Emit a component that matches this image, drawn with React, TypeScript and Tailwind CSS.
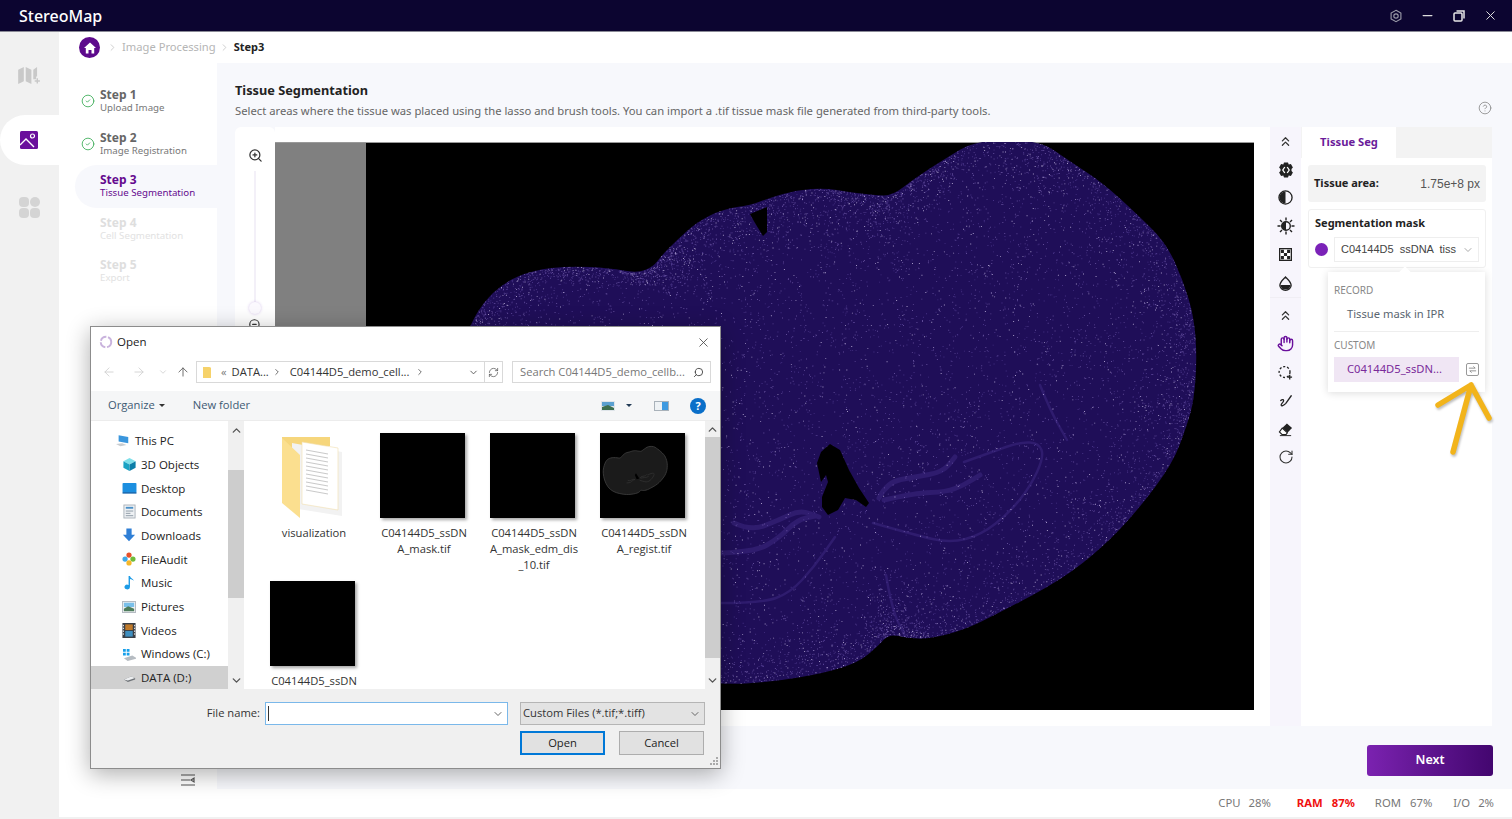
import React from 'react';
import {
  ArrowLeft, ArrowRight, ArrowUp, ChevronDown, ChevronRight, ChevronUp, ChevronsUp, Hand,
  Minus, RotateCw, Search, X, ZoomIn, ZoomOut, CircleHelp, RefreshCw, CircleCheck,
} from 'lucide-react';

const sans = "font-['Noto_Sans',sans-serif]";

// tissue outline, in page coordinates
const outline: [number, number][] = [
  [470, 325], [483, 303], [503, 283], [533, 270], [570, 266], [610, 268], [637, 273], [653, 267], [662, 255], [677, 240],
  [697, 222], [723, 209], [751, 205], [769, 198], [797, 190], [825, 188], [849, 192], [873, 195], [892, 196], [915, 178],
  [943, 160], [976, 140], [1039, 140], [1068, 160], [1103, 183], [1138, 215], [1166, 243], [1183, 280], [1194, 317], [1197, 357],
  [1194, 400], [1187, 425], [1173, 463], [1138, 510], [1103, 547], [1061, 580], [999, 613], [964, 630], [929, 639], [908, 638],
  [889, 634], [877, 647], [859, 662], [825, 673], [772, 682], [720, 685], [640, 675], [560, 650], [500, 600], [460, 520],
  [445, 440], [450, 380],
];

const smooth = (pts: [number, number][]) => {
  const mid = (a: [number, number], b: [number, number]) => [(a[0] + b[0]) / 2, (a[1] + b[1]) / 2];
  const first = mid(pts[pts.length - 1], pts[0]);
  let d = `M${first[0]} ${first[1]}`;
  pts.forEach((p, i) => {
    const m = mid(p, pts[(i + 1) % pts.length]);
    d += `Q${p[0]} ${p[1]} ${m[0]} ${m[1]}`;
  });
  return d + 'Z';
};

const line = (pts: number[][]) => {
  let d = `M${pts[0][0]} ${pts[0][1]}`;
  for (let i = 1; i < pts.length - 1; i++) {
    const mx = (pts[i][0] + pts[i + 1][0]) / 2;
    const my = (pts[i][1] + pts[i + 1][1]) / 2;
    d += `Q${pts[i][0]} ${pts[i][1]} ${mx} ${my}`;
  }
  const l = pts[pts.length - 1];
  return d + `L${l[0]} ${l[1]}`;
};

const tissuePath = smooth(outline);

const seeded = (s: number) => () => {
  s = (s + 0x6d2b79f5) | 0;
  let t = Math.imul(s ^ (s >>> 15), 1 | s);
  t = (t + Math.imul(t ^ (t >>> 7), 61 | t)) ^ t;
  return ((t ^ (t >>> 14)) >>> 0) / 4294967296;
};

const speckles = () => {
  const r = seeded(42);
  const paths = ['', '', ''];
  const dot = (x: number, y: number) => {
    const k = r() < 0.12 ? 0 : r() < 0.5 ? 1 : 2;
    paths[k] += `M${x.toFixed(1)} ${y.toFixed(1)}h.9v.9h-.9z`;
  };
  for (let i = 0; i < 11000; i++) dot(440 + r() * 770, 140 + r() * 550);
  for (let i = 0; i < 5000; i++) {
    const k = Math.floor(r() * outline.length);
    const a = outline[k];
    const b = outline[(k + 1) % outline.length];
    const t = r();
    const x = a[0] + (b[0] - a[0]) * t;
    const y = a[1] + (b[1] - a[1]) * t;
    const dx = 880 - x;
    const dy = 400 - y;
    const len = Math.hypot(dx, dy);
    const off = r() * r() * 70;
    dot(x + (dx / len) * off, y + (dy / len) * off);
  }
  return paths;
};
const dots = speckles();

const hippocampus = [
  [[873, 523], [915, 535], [950, 543], [981, 535], [1009, 513], [1030, 487], [1044, 457], [1039, 443], [1020, 442], [992, 452], [964, 462]],
  [[879, 498], [887, 482], [915, 477], [943, 472], [955, 457]],
  [[884, 500], [915, 493], [946, 492], [964, 485], [980, 475]],
  [[734, 523], [751, 531], [779, 520], [800, 510], [819, 517]],
  [[720, 553], [755, 552], [779, 538], [797, 520], [815, 516]],
  [[720, 603], [762, 603], [790, 593], [814, 567], [835, 537]],
  [[886, 575], [892, 610], [905, 636]],
  [[1040, 385], [1050, 410], [1067, 440]],
];

const TissueImage = () => (
  <svg viewBox="275 142 979 568" className="block h-[568px] w-[979px]">
    <defs>
      <clipPath id="tissue">
        <path d={tissuePath} />
      </clipPath>
    </defs>
    <rect x="275" y="142" width="979" height="568" fill="#000" />
    <rect x="275" y="142" width="91" height="568" fill="#808080" />
    <rect x="275" y="142" width="979" height="1" fill="#999" />
    <path d={tissuePath} fill="#1f0e58" />
    <g clipPath="url(#tissue)">
      {hippocampus.map((p, i) => (
        <path key={i} d={line(p)} fill="none" stroke="#2f1c6e" strokeWidth={i === 0 || i === 5 || i >= 6 ? 2.5 : 5} strokeLinecap="round" />
      ))}
      <path d={dots[0]} fill="#d8cdf0" opacity="0.8" />
      <path d={dots[1]} fill="#8d76c4" opacity="0.65" />
      <path d={dots[2]} fill="#5c46a0" opacity="0.7" />
    </g>
    <path d="M750 214L767 207L767 232L763 236L755 223Z" fill="#000" />
    <path d="M830 444L840 450L849 470L859 488L869 503L866 507L856 500L845 498L838 510L828 515L822 507L822 497L828 482L826 475L821 482L817 463L821 452Z" fill="#000" />
  </svg>
);

const steps = [
  { title: 'Step 1', sub: 'Upload Image', state: 'done' },
  { title: 'Step 2', sub: 'Image Registration', state: 'done' },
  { title: 'Step 3', sub: 'Tissue Segmentation', state: 'active' },
  { title: 'Step 4', sub: 'Cell Segmentation', state: 'todo' },
  { title: 'Step 5', sub: 'Export', state: 'todo' },
];

const Steps = () => (
  <div className="flex w-[158px] flex-col bg-white pt-[17px]">
    {steps.map((s) => (
      <div
        key={s.title}
        className={
          s.state === 'active'
            ? 'ml-[16px] flex h-[42.5px] items-center rounded-l-full bg-[#f7f8fc] pl-[25px]'
            : 'ml-[16px] flex h-[42.5px] items-center pl-[25px]'
        }
      >
        <div className="relative leading-none">
          {s.state === 'done' && <CircleCheck className="absolute left-[-19px] top-[6px] h-[14px] w-[14px] text-[#3fae5a]" strokeWidth={1.5} />}
          <div
            className={
              s.state === 'active'
                ? 'text-[12px] font-bold leading-[14px] text-[#650a8f]'
                : s.state === 'done'
                  ? 'text-[12px] font-bold leading-[14px] text-[#666]'
                  : 'text-[12px] font-bold leading-[14px] text-[#dedede]'
            }
          >
            {s.title}
          </div>
          <div
            className={
              s.state === 'active'
                ? 'whitespace-nowrap text-[9.7px] leading-[12px] text-[#650a8f]'
                : s.state === 'done'
                  ? 'whitespace-nowrap text-[9.7px] leading-[12px] text-[#777]'
                  : 'whitespace-nowrap text-[9.7px] leading-[12px] text-[#e2e2e2]'
            }
          >
            {s.sub}
          </div>
        </div>
      </div>
    ))}
    <svg viewBox="0 0 14 12" className="mb-[31px] ml-[122px] mt-auto h-[12px] w-[14px]" fill="none" stroke="#555" strokeWidth="1.2">
      <path d="M0 1h14M0 6h9M0 11h14M13 4v4l-3-2z" />
    </svg>
  </div>
);

const GearHex = () => (
  <svg viewBox="0 0 16 16" className="h-[16px] w-[16px]">
    <path d="M6 .5h4l.7 2 2.200-.4 2 3.400-1.400 1.500v2l1.400 1.500-2 3.400-2.200-.4-.7 2H6l-.7-2-2.200.4-2-3.400L2.500 9V7L1.100 5.500l2-3.400 2.200.4z" fill="#222" />
    <path d="M6.800 5L4.800 8l2 3M9.200 5l2 3-2 3" stroke="#fff" strokeWidth="1.3" fill="none" />
  </svg>
);

const HalfCircle = () => (
  <svg viewBox="0 0 16 16" className="h-[15px] w-[15px]" fill="none" stroke="#222" strokeWidth="1.4">
    <circle cx="8" cy="8" r="7" />
    <path d="M8 1.500A6.500 6.500 0 0 0 8 14.500Z" fill="#222" stroke="none" />
  </svg>
);

const SunFilled = () => (
  <svg viewBox="0 0 18 18" className="h-[18px] w-[18px]" fill="none" stroke="#222" strokeWidth="1.4">
    <circle cx="9" cy="9" r="4.300" />
    <path d="M9 4.700A4.300 4.300 0 0 0 9 13.300Z" fill="#222" stroke="none" />
    <path d="M9 .5v3M9 14.500v3M.5 9h3M14.500 9h3M3 3l2 2M13 13l2 2M3 15l2-2M13 5l2-2" />
  </svg>
);

const Checker = () => (
  <svg viewBox="0 0 14 14" className="h-[13px] w-[13px]">
    <rect x="0.7" y="0.7" width="12.6" height="12.6" fill="#fff" stroke="#222" strokeWidth="1.4" />
    <path d="M2 2h3.300v3.300H2zM8.700 2H12v3.300H8.700zM5.300 5.300h3.400v3.400H5.300zM2 8.700h3.300V12H2zM8.700 8.700H12V12H8.700z" fill="#222" />
  </svg>
);

const Drop = () => (
  <svg viewBox="0 0 16 16" className="h-[15px] w-[15px]" fill="none" stroke="#222" strokeWidth="1.4">
    <path d="M8 1C11 4 14 6.500 14 9.800A6 5.500 0 0 1 2 9.800C2 6.500 5 4 8 1Z" />
    <path d="M2.600 9.500h10.800A5.400 5 0 0 1 2.600 9.500Z" fill="#222" stroke="none" />
  </svg>
);

const Lasso = () => (
  <svg viewBox="0 0 16 16" className="h-[15px] w-[15px]" fill="none" stroke="#222" strokeWidth="1.4">
    <circle cx="7" cy="7.500" r="5.800" strokeDasharray="2.200 2" />
    <path d="M12.500 10.500v5M10 13h5" />
  </svg>
);

const BrushLine = () => (
  <svg viewBox="0 0 16 16" className="h-[14px] w-[14px]" fill="none" stroke="#222" strokeWidth="1.5" strokeLinecap="round">
    <path d="M14 2L8 10.500M2 7.500c2-2 4-1 3 1s-3 3-2.500 4.500 3-.5 4.500-1.500" />
  </svg>
);

const EraserTilt = () => (
  <svg viewBox="0 0 16 16" className="h-[15px] w-[15px]">
    <path d="M9.500 1.500L15 6.500 10 11.500 4.500 6.500z" fill="#222" />
    <path d="M4.500 6.500L10 11.500 8.500 13.500H4.500L1.500 10.500z" fill="#fff" stroke="#222" strokeWidth="1.200" />
    <path d="M2 14.500h12" stroke="#222" strokeWidth="1" />
  </svg>
);

const Tools = () => {
  const top = [
    <ChevronsUp key="a" className="h-[15px] w-[15px] text-[#333]" />,
    <GearHex key="b" />,
    <HalfCircle key="c" />,
    <SunFilled key="d" />,
    <Checker key="e" />,
    <Drop key="f" />,
  ];
  const bottom = [
    <ChevronsUp key="a" className="h-[15px] w-[15px] text-[#333]" />,
    <Hand key="b" className="h-[17px] w-[17px] text-[#6a0f9c]" strokeWidth={2} />,
    <Lasso key="c" />,
    <BrushLine key="d" />,
    <EraserTilt key="e" />,
    <RotateCw key="f" className="h-[16px] w-[16px] text-[#333]" strokeWidth={1.6} />,
  ];
  return (
    <div className="flex w-[31px] flex-col bg-[#f7f5fc]">
      {top.map((ic, i) => (
        <div key={i} className="flex h-[28.4px] items-center justify-center">{ic}</div>
      ))}
      <div className="flex flex-col border-t border-[#f0eef4] pt-[3px]">
        {bottom.map((ic, i) => (
          <div key={i} className="flex h-[28.4px] items-center justify-center">{ic}</div>
        ))}
      </div>
    </div>
  );
};

const SidePanel = () => (
  <div className="relative w-[191px] bg-white">
    <div className="flex h-[31px] bg-[#f3f3f3]">
      <div className="ml-[1px] flex w-[94px] items-center justify-center bg-white text-[11.2px] font-bold text-[#6a1b9a]">Tissue Seg</div>
    </div>
    <div className="ml-[7px] mr-[6px] mt-[7px] flex h-[37px] items-center justify-between rounded-[3px] bg-[#f3f3f3] px-[6px]">
      <span className="text-[11px] font-bold text-[#222]">Tissue area:</span>
      <span className="font-['Liberation_Sans',sans-serif] text-[12px] text-[#555]">1.75e+8 px</span>
    </div>
    <div className="ml-[7px] mr-[6px] mt-[7px] h-[59px] rounded-[3px] border border-[#f0f0f0] px-[6px] pt-[4px]">
      <div className="text-[11px] font-bold leading-[17px] text-[#222]">Segmentation mask</div>
      <div className="mt-[6px] flex items-center gap-[6px]">
        <span className="h-[13px] w-[13px] rounded-full bg-[#7b22b8]" />
        <div className="flex h-[25px] w-[145px] items-center justify-between border border-[#eee] pl-[6px] pr-[4px] font-['Liberation_Sans',sans-serif] text-[11px] text-[#444]">
          <span className="whitespace-pre">C04144D5  ssDNA  tiss</span>
          <ChevronDown className="h-[12px] w-[12px] text-[#aaa]" />
        </div>
      </div>
    </div>
    <div className="absolute left-[27px] top-[145px] h-[120px] w-[157px] bg-white px-[6px] pt-[11px] shadow-[0_1px_8px_rgba(0,0,0,0.14)]">
      <div className="absolute left-[73px] top-[-4px] h-[8px] w-[8px] rotate-45 bg-white" />
      <div className="text-[10px] leading-[14px] text-[#888]">RECORD</div>
      <div className="mt-[8px] pl-[13px] text-[11.2px] leading-[18px] text-[#5a6670]">Tissue mask in IPR</div>
      <div className="mt-[8px] border-t border-[#eee] pt-[6px] text-[10px] leading-[14px] text-[#888]">CUSTOM</div>
      <div className="mt-[5px] flex items-center">
        <div className="flex h-[25px] w-[126px] items-center bg-[#f0e6f4] pl-[13px] text-[11.2px] text-[#7a2a9a]">C04144D5_ssDN...</div>
        <div className="ml-[7px] flex h-[13px] w-[13px] items-center justify-center rounded-[2px] border border-[#999]">
          <svg viewBox="0 0 10 10" className="h-[9px] w-[9px]" fill="none" stroke="#888" strokeWidth="1">
            <path d="M1 3.500h7L6 1.500M9 6.500H2L4 8.500" />
          </svg>
        </div>
      </div>
    </div>
    <svg viewBox="0 0 60 74" className="absolute left-[133px] top-[254px] h-[74px] w-[60px] drop-shadow-[1px_2px_1px_rgba(0,0,0,0.25)]" fill="none" stroke="#f2b41b" strokeWidth="5.500" strokeLinecap="round" strokeLinejoin="round">
      <path d="M19 71L37 4M4 24L37 4L55 37" />
    </svg>
  </div>
);

const Main = () => (
  <div className="flex h-[726px] flex-col bg-[#f7f8fc] pl-[18px] pr-[20px] pt-[17px]">
    <div className="flex items-center justify-between">
      <div>
        <div className="text-[12.750px] font-bold leading-[20px] text-[#222]">Tissue Segmentation</div>
        <div className="mt-[2px] whitespace-nowrap text-[11.250px] leading-[18px] text-[#666]">
          Select areas where the tissue was placed using the lasso and brush tools. You can import a .tif tissue mask file generated from third-party tools.
        </div>
      </div>
      <CircleHelp className="mt-[15px] h-[14px] w-[14px] text-[#888]" strokeWidth={1.4} />
    </div>
    <div className="mt-[7px] flex h-[599px]">
      <div className="flex w-[40px] flex-col items-center rounded-t-[6px] bg-white pt-[21px]">
        <ZoomIn className="h-[15px] w-[15px] text-[#333]" strokeWidth={2} />
        <div className="relative mt-[8px] h-[131px] w-[2px] bg-[#f3f0f8]">
          <div className="absolute left-[-5px] top-[131px] h-[12px] w-[12px] rounded-full bg-[#fbf9fe] shadow-[0_0_3px_rgba(120,60,190,0.3)]" />
        </div>
        <ZoomOut className="mt-[16px] h-[14px] w-[14px] text-[#333]" strokeWidth={2} />
      </div>
      <div className="w-[995px] bg-white pt-[15px]">
        <TissueImage />
      </div>
      <Tools />
      <SidePanel />
    </div>
    <div className="mt-[19px] flex justify-end">
      <button className="mr-[-1px] h-[31px] w-[126px] rounded-[3px] bg-gradient-to-r from-[#7b22b0] to-[#43066f] text-[12.500px] font-semibold text-white">Next</button>
    </div>
  </div>
);

const StatusBar = () => (
  <div className="flex h-[28px] items-center justify-end bg-white pr-[18px] pt-[1px] text-[11.3px] text-[#777]">
    <span>CPU</span>
    <span className="ml-[8px]">28%</span>
    <span className="ml-[26px] font-bold text-[#f01010]">RAM</span>
    <span className="ml-[9px] font-bold text-[#f01010]">87%</span>
    <span className="ml-[20px]">ROM</span>
    <span className="ml-[9px]">67%</span>
    <span className="ml-[21px]">I/O</span>
    <span className="ml-[8px]">2%</span>
  </div>
);

// nav icons of the file dialog
const navIcons: Record<string, React.ReactNode> = {
  pc: (
    <svg viewBox="0 0 16 14" className="h-[13px] w-[14px]">
      <path d="M3 1l11 2v7L3 8z" fill="#3a96dd" />
      <path d="M0 11l7-1 5 2-7 1.500z" fill="#c8ccd0" />
    </svg>
  ),
  cube: (
    <svg viewBox="0 0 16 16" className="h-[15px] w-[15px]">
      <path d="M8 1l6.500 3.500L8 8 1.500 4.500z" fill="#7fe0ea" />
      <path d="M1.500 4.500L8 8v7l-6.500-3.500z" fill="#1aa3c4" />
      <path d="M14.500 4.500L8 8v7l6.500-3.500z" fill="#0b7ea8" />
    </svg>
  ),
  desktop: (
    <svg viewBox="0 0 16 14" className="h-[13px] w-[15px]">
      <rect x="0.500" y="1" width="15" height="10.500" rx="1" fill="#1c8fe0" />
      <rect x="0.500" y="11" width="15" height="1.500" fill="#0d5fa8" />
    </svg>
  ),
  docs: (
    <svg viewBox="0 0 14 16" className="h-[15px] w-[13px]">
      <rect x="1" y="1" width="12" height="14" fill="#eef1f4" stroke="#a9b2ba" />
      <path d="M3 4h8" stroke="#4a90c8" strokeWidth="2" />
      <path d="M3 7.500h8M3 10h5M3 12.500h8" stroke="#8b98a4" />
    </svg>
  ),
  down: (
    <svg viewBox="0 0 16 16" className="h-[15px] w-[14px]">
      <path d="M5 0h6v7h4l-7 7.500L1 7h4z" fill="#2f7fd6" />
    </svg>
  ),
  audit: (
    <svg viewBox="0 0 16 16" className="h-[14px] w-[14px]">
      <circle cx="8" cy="3.500" r="3" fill="#e8512a" />
      <circle cx="3.500" cy="8" r="3" fill="#3fa9e8" />
      <circle cx="12.500" cy="8" r="3" fill="#6fbb3a" />
      <circle cx="8" cy="12.500" r="3" fill="#f6b72a" />
    </svg>
  ),
  music: (
    <svg viewBox="0 0 12 16" className="h-[15px] w-[11px]">
      <path d="M5 1h1.500c.3 2 3 3 4.500 5-1-.6-3-1.500-4.500-1.800V13a3 2.500 0 1 1-1.500-2.200z" fill="#1c9be6" />
    </svg>
  ),
  pictures: (
    <svg viewBox="0 0 16 14" className="h-[12px] w-[14px]">
      <rect x="0.500" y="0.500" width="15" height="13" fill="#eef0f2" stroke="#aab2ba" />
      <rect x="2" y="2" width="12" height="5" fill="#7ac0ea" />
      <path d="M2 9l5-3 7 3v3H2z" fill="#4d7c5b" />
    </svg>
  ),
  videos: (
    <svg viewBox="0 0 14 16" className="h-[15px] w-[14px]">
      <rect width="14" height="16" fill="#3a3f46" />
      <rect x="3" y="1.500" width="8" height="6" fill="#c07a2a" />
      <rect x="3" y="8.500" width="8" height="6" fill="#3f8fc0" />
      <path d="M1 2v1.500M1 5v1.500M1 8v1.500M1 11v1.500M13 2v1.500M13 5v1.500M13 8v1.500M13 11v1.500" stroke="#fff" />
    </svg>
  ),
  win: (
    <svg viewBox="0 0 16 14" className="h-[13px] w-[15px]">
      <path d="M1 1h3v3H1zM5 1h3v3H5zM1 5h3v3H1zM5 5h3v3H5z" fill="#18a0ea" />
      <path d="M2 11l9-3 4 2.500v1L6 14z" fill="#b6bcc2" />
    </svg>
  ),
  data: (
    <svg viewBox="0 0 16 10" className="h-[8px] w-[15px]">
      <path d="M1 7l9-4 5 2v2L6 10z" fill="#6f7378" />
      <path d="M1 7l9-4 5 2-9 3z" fill="#eceef0" />
    </svg>
  ),
};

const navItems = [
  { icon: 'pc', label: 'This PC', cls: 'flex h-[23.7px] items-center gap-[4px] pl-[24px]' },
  { icon: 'cube', label: '3D Objects', cls: 'flex h-[23.7px] items-center gap-[4px] pl-[30px]' },
  { icon: 'desktop', label: 'Desktop', cls: 'flex h-[23.7px] items-center gap-[4px] pl-[30px]' },
  { icon: 'docs', label: 'Documents', cls: 'flex h-[23.7px] items-center gap-[4px] pl-[30px]' },
  { icon: 'down', label: 'Downloads', cls: 'flex h-[23.7px] items-center gap-[4px] pl-[30px]' },
  { icon: 'audit', label: 'FileAudit', cls: 'flex h-[23.7px] items-center gap-[4px] pl-[30px]' },
  { icon: 'music', label: 'Music', cls: 'flex h-[23.7px] items-center gap-[4px] pl-[30px]' },
  { icon: 'pictures', label: 'Pictures', cls: 'flex h-[23.7px] items-center gap-[4px] pl-[30px]' },
  { icon: 'videos', label: 'Videos', cls: 'flex h-[23.7px] items-center gap-[4px] pl-[30px]' },
  { icon: 'win', label: 'Windows (C:)', cls: 'flex h-[23.7px] items-center gap-[4px] pl-[30px]' },
  { icon: 'data', label: 'DATA (D:)', cls: 'flex h-[23.7px] items-center gap-[4px] bg-[#d0d0d0] pl-[30px]' },
];

const FolderIcon = () => (
  <svg viewBox="0 0 64 82" className="ml-[3px] h-[82px] w-[64px]">
    <path d="M0 1h48v9l-48 4z" fill="#f6d67c" />
    <path d="M10 7l50 9v64l-50-8z" fill="#f2f2f2" />
    <path d="M20 6l36 6v62l-36-6z" fill="#fff" stroke="#f1dfae" strokeWidth="0.600" />
    <path d="M24 14l22 4M24 18l22 4M24 22l22 4M24 26l22 4M24 30l22 4M24 34l22 4M24 38l22 4M24 42l22 4M24 46l22 4M24 50l22 4M24 54l22 4" stroke="#c9c9c9" strokeWidth="1" />
    <path d="M0 2l18 17v63L0 67z" fill="#fbdf8f" />
  </svg>
);

const BrainThumb = () => (
  <svg viewBox="0 0 85 85" className="h-[85px] w-[85px] bg-black">
    <g transform="translate(-35 1) scale(0.0855 0.0885)">
      <path d={tissuePath} fill="#1b1b1b" stroke="#3c3c3c" strokeWidth="10" />
      {hippocampus.slice(0, 5).map((p, i) => (
        <path key={i} d={line(p)} fill="none" stroke="#383838" strokeWidth="7" />
      ))}
      <path d="M830 444L869 503L838 510L817 463Z" fill="#000" />
    </g>
  </svg>
);

const files = [
  { kind: 'folder', lines: ['visualization'] },
  { kind: 'black', lines: ['C04144D5_ssDN', 'A_mask.tif'] },
  { kind: 'black', lines: ['C04144D5_ssDN', 'A_mask_edm_dis', '_10.tif'] },
  { kind: 'brain', lines: ['C04144D5_ssDN', 'A_regist.tif'] },
  { kind: 'black', lines: ['C04144D5_ssDN'] },
];

const OpenDialog = () => (
  <div className="absolute left-[90px] top-[326px] flex h-[443px] w-[631px] flex-col border border-[#8c8c8c] bg-white font-['Open_Sans',sans-serif] text-[11.200px] text-[#222] shadow-[0_5px_22px_rgba(0,0,0,0.32)]">
    <div className="flex h-[30px] items-center pl-[8px] pr-[9px]">
      <svg viewBox="0 0 16 16" className="h-[14px] w-[14px]" fill="none" stroke="#c9b3dd" strokeWidth="2.200">
        <circle cx="8" cy="8" r="6" strokeDasharray="8 2" />
      </svg>
      <span className="ml-[4px] text-[11.500px]">Open</span>
      <X className="ml-auto h-[15px] w-[15px] text-[#444]" strokeWidth={1.3} />
    </div>
    <div className="flex h-[34px] items-start pl-[3px] pt-[4px]">
      <div className="flex h-[22px] w-[30px] items-center justify-center"><ArrowLeft className="h-[14px] w-[14px] text-[#d0d0d0]" strokeWidth={1.5} /></div>
      <div className="flex h-[22px] w-[30px] items-center justify-center"><ArrowRight className="h-[14px] w-[14px] text-[#d0d0d0]" strokeWidth={1.5} /></div>
      <div className="flex h-[22px] w-[18px] items-center justify-center"><ChevronDown className="h-[10px] w-[10px] text-[#d0d0d0]" /></div>
      <div className="flex h-[22px] w-[22px] items-center justify-center"><ArrowUp className="h-[14px] w-[14px] text-[#666]" strokeWidth={1.6} /></div>
      <div className="ml-[2px] flex h-[22px] w-[307px] items-center border border-[#d9d9d9]">
        <svg viewBox="0 0 10 14" className="ml-[6px] h-[13px] w-[8px]"><path d="M0 0h8l2 1v13H0z" fill="#f6d26a" /></svg>
        <span className="ml-[10px] text-[#777]">«</span>
        <span className="ml-[5px] text-[#333]">DATA...</span>
        <ChevronRight className="ml-[3px] h-[10px] w-[10px] text-[#555]" />
        <span className="ml-[8px] whitespace-nowrap text-[#333]">C04144D5_demo_cell...</span>
        <ChevronRight className="ml-[6px] h-[10px] w-[10px] text-[#555]" />
        <ChevronDown className="ml-auto mr-[5px] h-[11px] w-[11px] text-[#555]" />
        <div className="flex h-full w-[18px] items-center justify-center border-l border-[#d9d9d9]"><RefreshCw className="h-[11px] w-[11px] text-[#555]" strokeWidth={1.6} /></div>
      </div>
      <div className="ml-[9px] flex h-[22px] w-[199px] items-center justify-between border border-[#d9d9d9] pl-[7px] pr-[6px] text-[#777]">
        <span className="whitespace-nowrap">Search C04144D5_demo_cellb...</span>
        <Search className="h-[11px] w-[11px] -scale-x-100 text-[#444]" strokeWidth={2} />
      </div>
    </div>
    <div className="flex h-[30px] items-center border-b border-[#ececec] bg-[#f5f6f7] pl-[17px] pr-[14px]">
      <span className="whitespace-nowrap text-[#3d5a73]">Organize</span>
      <span className="ml-[4px] h-0 w-0 border-x-[3px] border-t-[3px] border-x-transparent border-t-[#333]" />
      <span className="ml-[28px] whitespace-nowrap text-[#3d5a73]">New folder</span>
      <svg viewBox="0 0 14 10" className="ml-auto h-[10px] w-[14px]">
        <rect width="14" height="10" fill="#dfe5ea" />
        <rect x="1" y="1" width="12" height="4" fill="#5aa0d0" />
        <path d="M1 6l6-2 6 3v2H1z" fill="#3d6f4f" />
      </svg>
      <span className="ml-[11px] h-0 w-0 border-x-[3px] border-t-[3px] border-x-transparent border-t-[#223a55]" />
      <svg viewBox="0 0 15 10" className="ml-[22px] h-[10px] w-[15px]">
        <rect x="0.500" y="0.500" width="14" height="9" fill="#eef2f5" stroke="#a9b2ba" />
        <rect x="8" y="1" width="6" height="8" fill="#3f9ae0" />
      </svg>
      <div className="ml-[21px] flex h-[16px] w-[16px] items-center justify-center rounded-full bg-[#0a6fc9] text-[11px] font-bold leading-none text-white">?</div>
    </div>
    <div className="flex h-[268px]">
      <div className="w-[137px] overflow-hidden pt-[8px]">
        {navItems.map((n) => (
          <div key={n.label} className={n.cls}>
            <span className="flex w-[16px] shrink-0 items-center justify-center">{navIcons[n.icon]}</span>
            <span className="whitespace-nowrap text-[11.500px]">{n.label}</span>
          </div>
        ))}
      </div>
      <div className="flex w-[16px] flex-col items-center bg-[#f0f0f0]">
        <ChevronUp className="mt-[3px] h-[13px] w-[13px] text-[#555]" strokeWidth={2.5} />
        <div className="mt-[33px] h-[128px] w-full bg-[#cdcdcd]" />
        <ChevronDown className="mb-[2px] mt-auto h-[13px] w-[13px] text-[#555]" strokeWidth={2.5} />
      </div>
      <div className="grid w-[461px] auto-rows-[148px] grid-cols-[repeat(4,110px)] overflow-hidden pl-[13px] pt-[12px]">
        {files.map((f, i) => (
          <div key={i} className="flex flex-col items-center">
            <div className="flex h-[85px] w-[85px] items-end justify-center shadow-[2px_2px_3px_rgba(0,0,0,0.35)] data-[k=folder]:shadow-none" data-k={f.kind}>
              {f.kind === 'folder' && <FolderIcon />}
              {f.kind === 'black' && <div className="h-[85px] w-[85px] bg-black" />}
              {f.kind === 'brain' && <BrainThumb />}
            </div>
            <div className="ml-[4px] mt-[7px] text-center leading-[15.800px] text-[#333]">
              {f.lines.map((l) => (
                <div key={l} className="whitespace-nowrap">{l}</div>
              ))}
            </div>
          </div>
        ))}
      </div>
      <div className="flex w-[15px] flex-col items-center bg-[#f0f0f0]">
        <ChevronUp className="mt-[2px] h-[13px] w-[13px] text-[#555]" strokeWidth={2.5} />
        <div className="mt-[1px] h-[221px] w-full bg-[#cdcdcd]" />
        <ChevronDown className="mb-[2px] mt-auto h-[13px] w-[13px] text-[#555]" strokeWidth={2.5} />
      </div>
    </div>
    <div className="relative flex-1 bg-[#f0f0f0] pt-[13px]">
      <div className="flex items-center">
        <span className="w-[169px] text-right text-[#333]">File name:</span>
        <div className="ml-[5px] flex h-[23px] w-[243px] items-center justify-between border border-[#7ab8ea] bg-white pl-[2px] pr-[3px]">
          <span className="h-[15px] w-[1px] bg-[#333]" />
          <ChevronDown className="h-[12px] w-[12px] text-[#666]" />
        </div>
        <div className="ml-[12px] flex h-[23px] w-[185px] items-center justify-between border border-[#b5b5b5] bg-[#e3e3e3] pl-[2px] pr-[3px] text-[#333]">
          <span className="whitespace-nowrap">Custom Files (*.tif;*.tiff)</span>
          <ChevronDown className="h-[12px] w-[12px] text-[#666]" />
        </div>
      </div>
      <div className="ml-[429px] mt-[6px] flex">
        <button className="h-[24px] w-[85px] border-2 border-[#0078d7] bg-[#e1e1e1] text-[#222]">Open</button>
        <button className="ml-[14px] h-[24px] w-[85px] border border-[#adadad] bg-[#e1e1e1] text-[#222]">Cancel</button>
      </div>
      <svg viewBox="0 0 9 9" className="absolute bottom-[2px] right-[2px] h-[9px] w-[9px]" fill="#aaa">
        <path d="M7 0h2v2H7zM4 3h2v2H4zM7 3h2v2H7zM1 6h2v2H1zM4 6h2v2H4zM7 6h2v2H7z" />
      </svg>
    </div>
  </div>
);

export default function App() {
  return (
    <div className={`relative flex h-[819px] w-[1512px] flex-col overflow-hidden bg-[#f1f1f1] ${sans}`}>
      <header className="flex h-[32px] shrink-0 items-center border-b border-[#8a8a96] bg-[#0c0530] pl-[19px] pr-[14px] text-white">
        <span className="text-[16px] font-medium">StereoMap</span>
        <svg viewBox="0 0 16 16" className="ml-auto h-[14px] w-[14px]" fill="none" stroke="#9a9aa8" strokeWidth="1.300">
          <path d="M8 1.500l5.600 3.200v6.600L8 14.500l-5.600-3.200V4.700z" />
          <circle cx="8" cy="8" r="2.500" />
        </svg>
        <Minus className="ml-[17px] h-[15px] w-[15px] text-[#ddd]" strokeWidth={2} />
        <svg viewBox="0 0 12 12" className="ml-[18px] h-[12px] w-[12px]" fill="none" stroke="#e8e8e8" strokeWidth="1.500">
          <rect x="1" y="3" width="8" height="8" rx="1" />
          <path d="M3.500 1H11v7.500" />
        </svg>
        <X className="ml-[18px] h-[15px] w-[15px] text-[#ddd]" strokeWidth={1.6} />
      </header>
      <div className="flex flex-1">
        <aside className="flex w-[59px] shrink-0 flex-col">
          <div className="ml-[18px] mt-[35px] h-[20px]">
            <svg viewBox="0 0 24 18" className="h-[17px] w-[23px]" fill="#c9c9c9">
              <path d="M0 3l6-3v15l-6 3zM8 0l6 3v15l-6-3zM16 3l4-3v10h-1v3h-3zM21 12v2h2v1.500h-2v2h-1.500v-2h-2V14h2v-2z" />
            </svg>
          </div>
          <div className="mt-[28px] flex h-[50px] items-center rounded-l-full bg-white pl-[20px]">
            <svg viewBox="0 0 18 18" className="h-[18px] w-[18px]">
              <rect width="18" height="18" rx="1.500" fill="#6a0f9c" />
              <circle cx="12.500" cy="5" r="2" fill="none" stroke="#fff" strokeWidth="1.200" />
              <path d="M0 14l6-6 8 8" fill="none" stroke="#fff" strokeWidth="1.400" />
            </svg>
          </div>
          <div className="ml-[19px] mt-[32px] grid h-[21px] w-[21px] grid-cols-2 gap-[1.500px]">
            <span className="rounded-[4px] bg-[#d4d4d4]" />
            <span className="rounded-full bg-[#d4d4d4]" />
            <span className="rounded-[4px] bg-[#d4d4d4]" />
            <span className="rounded-[4px] bg-[#d4d4d4]" />
          </div>
        </aside>
        <div className="flex h-[785px] flex-1 flex-col bg-white">
          <div className="flex h-[31px] shrink-0 items-center pl-[20px] text-[11.200px]">
            <span className="flex h-[21px] w-[21px] items-center justify-center rounded-full bg-[#5d0a8c]">
              <svg viewBox="0 0 12 12" className="h-[12px] w-[12px]" fill="#fff">
                <path d="M6 0.500L12 6h-1.800v5.500H7.500V8h-3v3.500H1.800V6H0z" />
              </svg>
            </span>
            <ChevronRight className="ml-[7px] h-[11px] w-[11px] text-[#ccc]" />
            <span className="ml-[4px] text-[#b5b5b5]">Image Processing</span>
            <ChevronRight className="ml-[3px] h-[11px] w-[11px] text-[#ccc]" />
            <span className="ml-[4px] text-[11px] font-bold text-[#222]">Step3</span>
          </div>
          <div className="flex flex-1">
            <Steps />
            <div className="flex flex-1 flex-col">
              <Main />
              <StatusBar />
            </div>
          </div>
        </div>
      </div>
      <OpenDialog />
    </div>
  );
}
